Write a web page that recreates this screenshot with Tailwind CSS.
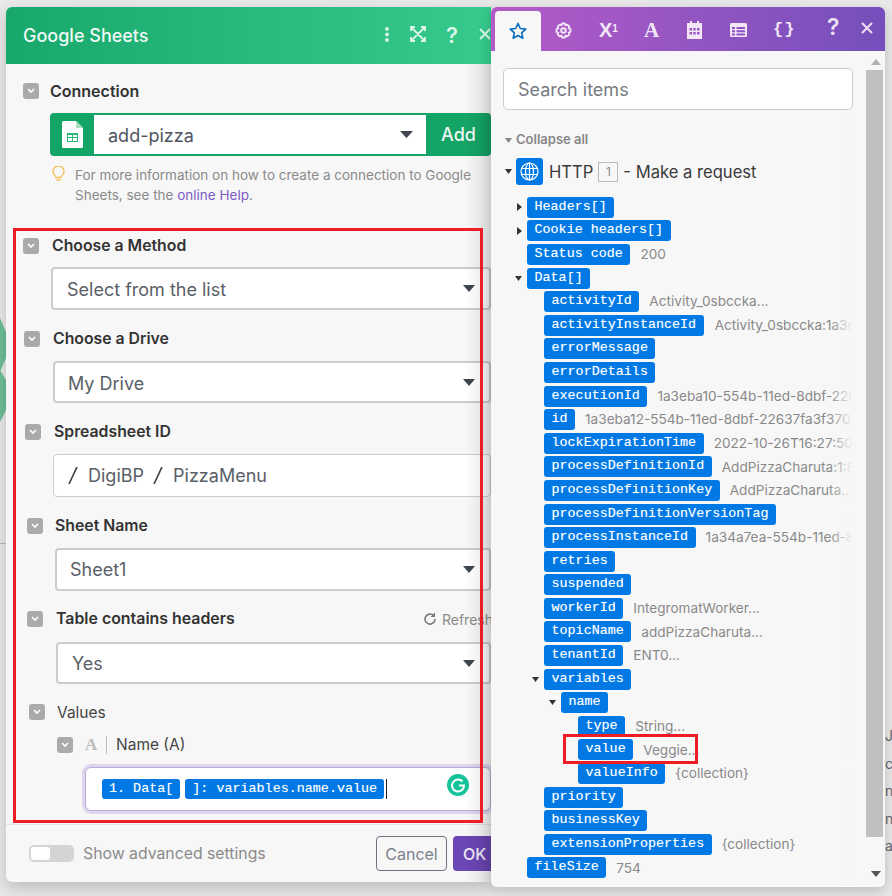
<!DOCTYPE html>
<html>
<head>
<meta charset="utf-8">
<script src="https://cdn.jsdelivr.net/npm/@tailwindcss/browser@4"></script>
</head>
<body class="relative w-[892px] h-[896px] overflow-hidden bg-[#e9e9e9] font-['Inter','Liberation_Sans',sans-serif]">

<!-- canvas behind the windows -->
<svg class="absolute left-0 top-[318px]" width="6" height="104" viewBox="0 0 6 104"><path d="M0 0L6 14V40L0 54ZM6 62V92L0 104V52Z" fill="#6dbf98"/></svg>
<div class="absolute left-0 top-[543px] w-[6px] h-px bg-[#bbb]"></div>
<div class="absolute left-[885px] top-[722px] w-[7px] overflow-hidden text-[14px] leading-[27.5px] text-[#666] whitespace-nowrap">
  <div>J</div><div>c</div><div>ni</div><div>n</div><div>as</div>
</div>

<div class="flex items-start pl-[6px] pt-[7px]">

  <!-- Google Sheets module window -->
  <section class="relative w-[485px] h-[875px] shrink-0 rounded-l-[6px] overflow-hidden bg-[#f7f7f7] shadow-[0_6px_16px_rgba(0,0,0,0.2)] flex flex-col">
    <header class="h-[57px] shrink-0 flex items-center bg-linear-to-r from-[#18a86c] to-[#36ca8c] text-white">
      <h1 class="ml-[17px] text-[18px] font-medium text-white/95">Google Sheets</h1>
      <svg class="absolute left-[378px] top-[19px]" width="6" height="16" viewBox="0 0 6 16"><circle cx="3" cy="3" r="1.9" fill="#d8f5e7"/><circle cx="3" cy="8.5" r="1.9" fill="#d8f5e7"/><circle cx="3" cy="14" r="1.9" fill="#d8f5e7"/></svg>
      <svg class="absolute left-[404px] top-[19px]" width="16" height="16" viewBox="0 0 16 16" fill="none" stroke="#d8f5e7" stroke-width="1.8"><path d="M1 5V1H5M11 1H15V5M15 11V15H11M5 15H1V11M2 2L14 14M14 2L2 14"/></svg>
      <span class="absolute left-[440px] top-[15px] text-[22px] leading-[26px] font-semibold text-[#d8f5e7]">?</span>
      <svg class="absolute left-[473px] top-[21px]" width="12" height="12" viewBox="0 0 12 12" stroke="#d8f5e7" stroke-width="2"><path d="M1 1L11 11M11 1L1 11"/></svg>
    </header>

    <!-- Connection -->
    <div class="mt-[17px] ml-[17px] h-5 flex items-center">
      <span class="w-4 h-4 rounded-[3px] bg-[#aaa] flex items-center justify-center"><svg width="8" height="6" viewBox="0 0 8 6" fill="none" stroke="#fff" stroke-width="1.6"><path d="M1 1L4 4L7 1"/></svg></span>
      <span class="ml-[11px] text-[16px] font-semibold text-[#333]">Connection</span>
    </div>
    <div class="mt-[12px] ml-[44px] h-[43px] flex rounded-[4px] bg-[#14a566]">
      <div class="w-[44px] flex items-center justify-center">
        <svg width="21" height="27" viewBox="0 0 21 27"><path d="M0 1.5A1.5 1.5 0 0 1 1.5 0H14L21 7V25.5A1.5 1.5 0 0 1 19.5 27H1.5A1.5 1.5 0 0 1 0 25.5Z" fill="#fff"/><path d="M14 0L21 7H14Z" fill="#a8dfc3"/><path d="M5 12H16V21H5Z" fill="#2ab673"/><path d="M6 14H10V16H6ZM11 14H15V16H11ZM6 17H10V20H6ZM11 17H15V20H11Z" fill="#fff"/></svg>
      </div>
      <div class="my-[2px] w-[332px] bg-white flex items-center justify-between pl-[14px] pr-[13px]">
        <span class="pt-[2px] text-[18px] text-[#4e5560]">add-pizza</span>
        <svg width="13" height="7" viewBox="0 0 13 7"><path d="M0 0H13L6.5 7Z" fill="#3f4650"/></svg>
      </div>
      <div class="flex-1 flex items-center justify-center text-[18px] font-medium text-white/95">Add</div>
    </div>
    <div class="mt-[9px] ml-[46px] flex">
      <svg class="mt-[1px]" width="13" height="16" viewBox="0 0 13 16" fill="none" stroke="#f4c25a" stroke-width="1.4"><path d="M4 11.5C4 9.5 1 8.500 1 5.500A5.500 5.500 0 0 1 12 5.500C12 8.500 9 9.500 9 11.500ZM4.500 14H8.500"/></svg>
      <p class="ml-[10px] text-[13.5px] leading-[20px] text-[#8a8a8a] whitespace-nowrap">For more information on how to create a connection to Google<br>Sheets, see the <span class="text-[#7c5cc4]">online Help</span>.</p>
    </div>

    <!-- Choose a Method -->
    <div class="mt-[31px] ml-[17px] h-5 flex items-center">
      <span class="w-4 h-4 rounded-[3px] bg-[#aaa] flex items-center justify-center"><svg width="8" height="6" viewBox="0 0 8 6" fill="none" stroke="#fff" stroke-width="1.6"><path d="M1 1L4 4L7 1"/></svg></span>
      <span class="ml-[13px] text-[15.8px] font-semibold text-[#333]">Choose a Method</span>
    </div>
    <div class="mt-[11px] ml-[45px] h-[43px] rounded-[4px] border-2 border-[#ccc] bg-white flex items-center justify-between pl-[14px] pr-[14px]">
      <span class="pt-[2px] text-[18px] text-[#5a6068]">Select from the list</span>
      <svg width="12" height="7" viewBox="0 0 12 7"><path d="M0 0H12L6 7Z" fill="#3f4650"/></svg>
    </div>

    <!-- Choose a Drive -->
    <div class="mt-[19px] ml-[18px] h-5 flex items-center">
      <span class="w-4 h-4 rounded-[3px] bg-[#aaa] flex items-center justify-center"><svg width="8" height="6" viewBox="0 0 8 6" fill="none" stroke="#fff" stroke-width="1.6"><path d="M1 1L4 4L7 1"/></svg></span>
      <span class="ml-[13px] text-[15.8px] font-semibold text-[#333]">Choose a Drive</span>
    </div>
    <div class="mt-[12px] ml-[47px] h-[42px] rounded-[4px] border-2 border-[#ccc] bg-white flex items-center justify-between pl-[13px] pr-[14px]">
      <span class="pt-[2px] text-[18px] text-[#5a6068]">My Drive</span>
      <svg width="12" height="7" viewBox="0 0 12 7"><path d="M0 0H12L6 7Z" fill="#3f4650"/></svg>
    </div>

    <!-- Spreadsheet ID -->
    <div class="mt-[19px] ml-[19px] h-5 flex items-center">
      <span class="w-4 h-4 rounded-[3px] bg-[#aaa] flex items-center justify-center"><svg width="8" height="6" viewBox="0 0 8 6" fill="none" stroke="#fff" stroke-width="1.6"><path d="M1 1L4 4L7 1"/></svg></span>
      <span class="ml-[13px] text-[15.8px] font-semibold text-[#333]">Spreadsheet ID</span>
    </div>
    <div class="mt-[12px] ml-[47px] h-[43px] rounded-[4px] border border-[#ccc] bg-white flex items-center pl-[14px]">
      <svg width="10" height="17" viewBox="0 0 10 17" stroke="#444" stroke-width="1.7"><path d="M9 0L1 17"/></svg>
      <span class="ml-[10px] text-[18px] text-[#5a6068]">DigiBP</span>
      <svg class="ml-[9px]" width="10" height="17" viewBox="0 0 10 17" stroke="#444" stroke-width="1.7"><path d="M9 0L1 17"/></svg>
      <span class="ml-[10px] text-[18px] text-[#5a6068]">PizzaMenu</span>
    </div>

    <!-- Sheet Name -->
    <div class="mt-[19px] ml-[21px] h-5 flex items-center">
      <span class="w-4 h-4 rounded-[3px] bg-[#aaa] flex items-center justify-center"><svg width="8" height="6" viewBox="0 0 8 6" fill="none" stroke="#fff" stroke-width="1.6"><path d="M1 1L4 4L7 1"/></svg></span>
      <span class="ml-[12px] text-[15.8px] font-semibold text-[#333]">Sheet Name</span>
    </div>
    <div class="mt-[12px] ml-[49px] h-[43px] rounded-[4px] border-2 border-[#ccc] bg-white flex items-center justify-between pl-[13px] pr-[14px]">
      <span class="text-[18px] text-[#5a6068]">Sheet1</span>
      <svg width="12" height="7" viewBox="0 0 12 7"><path d="M0 0H12L6 7Z" fill="#3f4650"/></svg>
    </div>

    <!-- Table contains headers -->
    <div class="mt-[18px] ml-[21px] h-5 flex items-center">
      <span class="w-4 h-4 rounded-[3px] bg-[#aaa] flex items-center justify-center"><svg width="8" height="6" viewBox="0 0 8 6" fill="none" stroke="#fff" stroke-width="1.6"><path d="M1 1L4 4L7 1"/></svg></span>
      <span class="ml-[13px] text-[15.9px] font-semibold text-[#333]">Table contains headers</span>
      <svg class="ml-auto" width="14" height="14" viewBox="0 0 14 14" fill="none" stroke="#777" stroke-width="1.6"><path d="M12 7A5 5 0 1 1 10.500 3.500"/><path d="M12 0.500V5H7.500Z" fill="#777" stroke="none"/></svg>
      <span class="ml-[5px] mr-[-2px] text-[14px] text-[#8a8a8a]">Refresh</span>
    </div>
    <div class="mt-[13px] ml-[50px] h-[42px] rounded-[4px] border-2 border-[#ccc] bg-white flex items-center justify-between pl-[14px] pr-[14px]">
      <span class="text-[18px] text-[#5a6068]">Yes</span>
      <svg width="12" height="7" viewBox="0 0 12 7"><path d="M0 0H12L6 7Z" fill="#3f4650"/></svg>
    </div>

    <!-- Values -->
    <div class="mt-[18px] ml-[23px] h-5 flex items-center">
      <span class="w-4 h-4 rounded-[3px] bg-[#aaa] flex items-center justify-center"><svg width="8" height="6" viewBox="0 0 8 6" fill="none" stroke="#fff" stroke-width="1.6"><path d="M1 1L4 4L7 1"/></svg></span>
      <span class="ml-[12px] pt-[2px] text-[15.5px] text-[#444]">Values</span>
    </div>
    <div class="mt-[13px] ml-[51px] h-5 flex items-center">
      <span class="w-4 h-4 rounded-[3px] bg-[#aaa] flex items-center justify-center"><svg width="8" height="6" viewBox="0 0 8 6" fill="none" stroke="#fff" stroke-width="1.6"><path d="M1 1L4 4L7 1"/></svg></span>
      <span class="ml-[12px] w-[22px] h-[18px] border-r border-[#bbb] font-['Liberation_Serif',serif] text-[17px] leading-[18px] font-bold text-[#bbb]">A</span>
      <span class="ml-[9px] text-[15.5px] text-[#444]">Name (A)</span>
    </div>
    <div class="relative mt-[12px] ml-[79px] h-[44px] rounded-[6px] border border-[#b9abd9] ring-[3px] ring-[#ddd5ec] bg-white flex items-center pl-[16px] pb-[1px] [text-shadow:0_0_1px_rgba(255,255,255,0.4)]">
      <span class="h-5 rounded-[3px] bg-[#0079e5] px-[7px] font-['Liberation_Mono',monospace] text-[13.4px] leading-5 text-white">1. Data[</span>
      <span class="ml-[5px] h-5 rounded-[3px] bg-[#0079e5] px-[7px] font-['Liberation_Mono',monospace] text-[13.4px] leading-5 text-white">]: variables.name.value</span>
      <span class="ml-[2px] w-px h-5 bg-[#222]"></span>
      <svg class="absolute left-[361px] top-[6px]" width="22" height="22" viewBox="0 0 22 22"><circle cx="11" cy="11" r="11" fill="#15c39a"/><path d="M15.500 7.500A6 6 0 1 0 17 11.500H12" fill="none" stroke="#fff" stroke-width="2"/></svg>
    </div>

    <!-- Footer -->
    <footer class="mt-[13px] h-[58px] border-t border-[#e4e4e4] flex items-center pl-[23px]">
      <span class="w-[45px] h-[17px] shrink-0 rounded-[5px] bg-[#d4d4d4] p-[2px]"><span class="block w-[19px] h-[13px] rounded-[3px] bg-white"></span></span>
      <span class="ml-[9px] w-[183px] shrink-0 text-[15.8px] whitespace-nowrap text-[#8a8a8a]">Show advanced settings</span>
      <span class="ml-[110px] w-[71px] h-[35px] shrink-0 rounded-[4px] border border-[#6b7480] flex items-center justify-center text-[16px] text-[#7a828c]">Cancel</span>
      <span class="ml-[6px] w-[50px] h-[35px] shrink-0 rounded-l-[4px] bg-[#6b46b5] pl-[10px] flex items-center text-[16px] font-medium text-white/90">OK</span>
    </footer>

    <div class="absolute right-0 top-[57px] bottom-0 w-[26px] bg-linear-to-l from-black/10 to-transparent pointer-events-none"></div>
  </section>

  <!-- Mapping panel -->
  <section class="relative w-[394px] h-[880px] shrink-0 rounded-[6px] overflow-hidden bg-[#f7f7f7] shadow-[0_4px_14px_rgba(0,0,0,0.2)] flex flex-col">
    <nav class="relative h-[44px] shrink-0 bg-linear-to-r from-[#b45ac8] to-[#744fbb] text-white">
      <div class="absolute left-[4px] top-[4px] w-[46px] h-[40px] rounded-t-[4px] bg-[#f7f7f7] flex items-center justify-center">
        <svg width="18" height="18" viewBox="0 0 18 18" fill="none" stroke="#0b6fbe" stroke-width="1.7" stroke-linejoin="round"><path d="M9 1.500L11.300 6.500L16.700 7.100L12.700 10.800L13.800 16.200L9 13.500L4.200 16.200L5.300 10.800L1.300 7.100L6.700 6.500Z"/></svg>
      </div>
      <svg class="absolute left-[64px] top-[15px]" width="17" height="17" viewBox="0 0 17 17" fill="none" stroke="#f3e6f7" stroke-width="2"><circle cx="8.500" cy="8.500" r="2.300"/><path stroke-linejoin="round" stroke-width="1.800" d="M7 1.500H10L10.500 3.400L12.300 2.600L14.400 4.700L13.600 6.500L15.500 7V10L13.600 10.500L14.400 12.300L12.300 14.400L10.500 13.600L10 15.500H7L6.500 13.600L4.700 14.400L2.600 12.300L3.400 10.500L1.500 10V7L3.400 6.500L2.600 4.700L4.700 2.600L6.500 3.400Z"/></svg>
      <span class="absolute left-[108px] top-[12px] font-['Liberation_Sans',sans-serif] text-[20px] leading-[22px] font-bold text-[#f3e6f7]">X<sup class="text-[10px]">1</sup></span>
      <span class="absolute left-[153px] top-[12px] font-['Liberation_Serif',serif] text-[21px] leading-[22px] font-bold text-[#f3e6f7]">A</span>
      <svg class="absolute left-[196px] top-[14px]" width="15" height="18" viewBox="0 0 15 18"><path d="M3 0H5V2H10V0H12V2H15V18H0V2H3Z" fill="#f3e6f7"/><path d="M2.500 7H5V9.500H2.500ZM6.300 7H8.700V9.500H6.300ZM10 7H12.500V9.500H10ZM2.500 11H5V13.500H2.500ZM6.300 11H8.700V13.500H6.300ZM10 11H12.500V13.500H10Z" fill="#9a54c4"/></svg>
      <svg class="absolute left-[239px] top-[16px]" width="17" height="14" viewBox="0 0 17 14"><rect width="17" height="14" rx="1.500" fill="#f3e6f7"/><path d="M2 4H5V6H2ZM6.500 4H15V6H6.500ZM2 7.200H5V9.200H2ZM6.500 7.200H15V9.200H6.500ZM2 10.400H5V12.400H2ZM6.500 10.400H15V12.400H6.500Z" fill="#8f52c2"/></svg>
      <span class="absolute left-[282px] top-[12px] font-['Liberation_Mono',monospace] text-[17px] leading-[22px] font-bold tracking-[1px] text-[#f3e6f7]">{}</span>
      <span class="absolute left-[336px] top-[7px] text-[23px] leading-[26px] font-semibold text-[#ecdff3]">?</span>
      <svg class="absolute left-[370px] top-[15px]" width="12" height="12" viewBox="0 0 12 12" stroke="#ecdff3" stroke-width="2"><path d="M1 1L11 11M11 1L1 11"/></svg>
    </nav>

    <div class="relative flex-1 flex min-h-0">
      <div class="relative w-[375px] shrink-0 overflow-hidden">
        <div class="ml-[12px] mr-[13px] mt-[17px] h-[42px] rounded-[5px] border border-[#ccc] bg-white pl-[14px] flex items-center text-[18px] text-[#767b82]">Search items</div>

        <div class="mt-[20px] ml-[14px] h-5 flex items-center text-[13px] font-semibold text-[#888]">
          <svg width="7" height="5" viewBox="0 0 7 5"><path d="M0 0H7L3.500 5Z" fill="#888"/></svg>
          <span class="ml-[4px]">Collapse all</span>
        </div>
        <div class="mt-[8px] ml-[14px] h-[27px] flex items-center">
          <svg width="7" height="5" viewBox="0 0 7 5"><path d="M0 0H7L3.500 5Z" fill="#333"/></svg>
          <span class="ml-[4px] w-[27px] h-[27px] rounded-[3px] bg-[#0079e5] flex items-center justify-center">
            <svg width="19" height="19" viewBox="0 0 19 19" fill="none" stroke="#fff" stroke-width="1.200"><circle cx="9.500" cy="9.500" r="8.500"/><ellipse cx="9.500" cy="9.500" rx="4" ry="8.500"/><path d="M9.500 1V18M1.500 6.500H17.500M1.500 12.500H17.500"/></svg>
          </span>
          <span class="ml-[6px] pt-[2px] text-[16.6px] text-[#3a3a3a]">HTTP</span>
          <span class="ml-[5px] w-[20px] h-[20px] border border-[#bbb] flex items-center justify-center text-[12px] text-[#888]">1</span>
          <span class="ml-[5px] pt-[2px] text-[16.6px] text-[#3a3a3a]">- Make a request</span>
        </div>

        <!-- tree -->
        <div class="mt-[10.500px] ml-[1px] text-[13.6px] text-[#888] font-['Liberation_Mono',monospace] [text-shadow:0_0_1px_rgba(255,255,255,0.4)]">
          <div class="h-[23.6px] flex items-center pl-[25px]"><svg class="mr-[5px]" width="5" height="8" viewBox="0 0 5 8"><path d="M0 0L5 4L0 8Z" fill="#333"/></svg><span class="h-[21px] rounded-[3px] bg-[#0079e5] px-[7.500px] text-[13.4px] leading-[20px] text-white">Headers[]</span></div>
          <div class="h-[23.6px] flex items-center pl-[25px]"><svg class="mr-[5px]" width="5" height="8" viewBox="0 0 5 8"><path d="M0 0L5 4L0 8Z" fill="#333"/></svg><span class="h-[21px] rounded-[3px] bg-[#0079e5] px-[7.500px] text-[13.4px] leading-[20px] text-white">Cookie headers[]</span></div>
          <div class="h-[23.6px] flex items-center pl-[35px]"><span class="h-[21px] rounded-[3px] bg-[#0079e5] px-[7.500px] text-[13.4px] leading-[20px] text-white">Status code</span><span class="ml-[10px] font-['Inter',sans-serif] whitespace-nowrap">200</span></div>
          <div class="h-[23.6px] flex items-center pl-[23px]"><svg class="mr-[5px]" width="7" height="5" viewBox="0 0 7 5"><path d="M0 0H7L3.500 5Z" fill="#333"/></svg><span class="h-[21px] rounded-[3px] bg-[#0079e5] px-[7.500px] text-[13.4px] leading-[20px] text-white">Data[]</span></div>
          <div class="h-[23.6px] flex items-center pl-[52px]"><span class="h-[21px] rounded-[3px] bg-[#0079e5] px-[7.500px] text-[13.4px] leading-[20px] text-white">activityId</span><span class="ml-[10px] font-['Inter',sans-serif] whitespace-nowrap">Activity_0sbccka...</span></div>
          <div class="h-[23.6px] flex items-center pl-[52px]"><span class="h-[21px] rounded-[3px] bg-[#0079e5] px-[7.500px] text-[13.4px] leading-[20px] text-white">activityInstanceId</span><span class="ml-[11px] font-['Inter',sans-serif] whitespace-nowrap">Activity_0sbccka:1a3eba10-554b</span></div>
          <div class="h-[23.6px] flex items-center pl-[52px]"><span class="h-[21px] rounded-[3px] bg-[#0079e5] px-[7.500px] text-[13.4px] leading-[20px] text-white">errorMessage</span></div>
          <div class="h-[23.6px] flex items-center pl-[52px]"><span class="h-[21px] rounded-[3px] bg-[#0079e5] px-[7.500px] text-[13.4px] leading-[20px] text-white">errorDetails</span></div>
          <div class="h-[23.6px] flex items-center pl-[52px]"><span class="h-[21px] rounded-[3px] bg-[#0079e5] px-[7.500px] text-[13.4px] leading-[20px] text-white">executionId</span><span class="ml-[10px] font-['Inter',sans-serif] whitespace-nowrap">1a3eba10-554b-11ed-8dbf-22637fa3f370</span></div>
          <div class="h-[23.6px] flex items-center pl-[52px]"><span class="h-[21px] rounded-[3px] bg-[#0079e5] px-[7.500px] text-[13.4px] leading-[20px] text-white">id</span><span class="ml-[10px] font-['Inter',sans-serif] whitespace-nowrap">1a3eba12-554b-11ed-8dbf-22637fa3f370</span></div>
          <div class="h-[23.6px] flex items-center pl-[52px]"><span class="h-[21px] rounded-[3px] bg-[#0079e5] px-[7.500px] text-[13.4px] leading-[20px] text-white">lockExpirationTime</span><span class="ml-[10px] font-['Inter',sans-serif] whitespace-nowrap">2022-10-26T16:27:50.000</span></div>
          <div class="h-[23.6px] flex items-center pl-[52px]"><span class="h-[21px] rounded-[3px] bg-[#0079e5] px-[7.500px] text-[13.4px] leading-[20px] text-white">processDefinitionId</span><span class="ml-[10px] font-['Inter',sans-serif] whitespace-nowrap">AddPizzaCharuta:1:8a3f</span></div>
          <div class="h-[23.6px] flex items-center pl-[52px]"><span class="h-[21px] rounded-[3px] bg-[#0079e5] px-[7.500px] text-[13.4px] leading-[20px] text-white">processDefinitionKey</span><span class="ml-[10px] font-['Inter',sans-serif] whitespace-nowrap">AddPizzaCharuta...</span></div>
          <div class="h-[23.6px] flex items-center pl-[52px]"><span class="h-[21px] rounded-[3px] bg-[#0079e5] px-[7.500px] text-[13.4px] leading-[20px] text-white">processDefinitionVersionTag</span></div>
          <div class="h-[23.6px] flex items-center pl-[52px]"><span class="h-[21px] rounded-[3px] bg-[#0079e5] px-[7.500px] text-[13.4px] leading-[20px] text-white">processInstanceId</span><span class="ml-[10px] font-['Inter',sans-serif] whitespace-nowrap">1a34a7ea-554b-11ed-8dbf</span></div>
          <div class="h-[23.6px] flex items-center pl-[52px]"><span class="h-[21px] rounded-[3px] bg-[#0079e5] px-[7.500px] text-[13.4px] leading-[20px] text-white">retries</span></div>
          <div class="h-[23.6px] flex items-center pl-[52px]"><span class="h-[21px] rounded-[3px] bg-[#0079e5] px-[7.500px] text-[13.4px] leading-[20px] text-white">suspended</span></div>
          <div class="h-[23.6px] flex items-center pl-[52px]"><span class="h-[21px] rounded-[3px] bg-[#0079e5] px-[7.500px] text-[13.4px] leading-[20px] text-white">workerId</span><span class="ml-[10px] font-['Inter',sans-serif] whitespace-nowrap">IntegromatWorker...</span></div>
          <div class="h-[23.6px] flex items-center pl-[52px]"><span class="h-[21px] rounded-[3px] bg-[#0079e5] px-[7.500px] text-[13.4px] leading-[20px] text-white">topicName</span><span class="ml-[10px] font-['Inter',sans-serif] whitespace-nowrap">addPizzaCharuta...</span></div>
          <div class="h-[23.6px] flex items-center pl-[52px]"><span class="h-[21px] rounded-[3px] bg-[#0079e5] px-[7.500px] text-[13.4px] leading-[20px] text-white">tenantId</span><span class="ml-[10px] font-['Inter',sans-serif] whitespace-nowrap">ENT0...</span></div>
          <div class="h-[23.6px] flex items-center pl-[40px]"><svg class="mr-[5px]" width="7" height="5" viewBox="0 0 7 5"><path d="M0 0H7L3.500 5Z" fill="#333"/></svg><span class="h-[21px] rounded-[3px] bg-[#0079e5] px-[7.500px] text-[13.4px] leading-[20px] text-white">variables</span></div>
          <div class="h-[23.6px] flex items-center pl-[57px]"><svg class="mr-[5px]" width="7" height="5" viewBox="0 0 7 5"><path d="M0 0H7L3.500 5Z" fill="#333"/></svg><span class="h-[21px] rounded-[3px] bg-[#0079e5] px-[7.500px] text-[13.4px] leading-[20px] text-white">name</span></div>
          <div class="h-[23.6px] flex items-center pl-[86px]"><span class="h-[21px] rounded-[3px] bg-[#0079e5] px-[7.500px] text-[13.4px] leading-[20px] text-white">type</span><span class="ml-[10px] font-['Inter',sans-serif] whitespace-nowrap">String...</span></div>
          <div class="h-[23.6px] flex items-center pl-[86px]"><span class="h-[21px] rounded-[3px] bg-[#0079e5] px-[7.500px] text-[13.4px] leading-[20px] text-white">value</span><span class="ml-[10px] font-['Inter',sans-serif] whitespace-nowrap">Veggie...</span></div>
          <div class="h-[23.6px] flex items-center pl-[86px]"><span class="h-[21px] rounded-[3px] bg-[#0079e5] px-[7.500px] text-[13.4px] leading-[20px] text-white">valueInfo</span><span class="ml-[10px] font-['Inter',sans-serif] whitespace-nowrap">{collection}</span></div>
          <div class="h-[23.6px] flex items-center pl-[52px]"><span class="h-[21px] rounded-[3px] bg-[#0079e5] px-[7.500px] text-[13.4px] leading-[20px] text-white">priority</span></div>
          <div class="h-[23.6px] flex items-center pl-[52px]"><span class="h-[21px] rounded-[3px] bg-[#0079e5] px-[7.500px] text-[13.4px] leading-[20px] text-white">businessKey</span></div>
          <div class="h-[23.6px] flex items-center pl-[52px]"><span class="h-[21px] rounded-[3px] bg-[#0079e5] px-[7.500px] text-[13.4px] leading-[20px] text-white">extensionProperties</span><span class="ml-[10px] font-['Inter',sans-serif] whitespace-nowrap">{collection}</span></div>
          <div class="h-[23.6px] flex items-center pl-[35px]"><span class="h-[21px] rounded-[3px] bg-[#0079e5] px-[7.500px] text-[13.4px] leading-[20px] text-white">fileSize</span><span class="ml-[10px] font-['Inter',sans-serif] whitespace-nowrap">754</span></div>
        </div>

        <div class="absolute top-[60px] right-[13px] bottom-0 w-[24px] bg-linear-to-r from-transparent to-[#f7f7f7]"></div>
        <div class="absolute top-[60px] right-0 bottom-0 w-[13px] bg-[#f7f7f7]"></div>
      </div>

      <!-- scrollbar -->
      <div class="w-[19px] shrink-0 flex flex-col items-center bg-[#f7f7f7]">
        <svg class="mt-[8px]" width="10" height="6" viewBox="0 0 10 6"><path d="M5 0L10 6H0Z" fill="#b0b0b0"/></svg>
        <div class="mt-[5px] ml-[-2px] w-[17px] h-[767px] bg-[#c0c0c0]"></div>
        <svg class="mt-[34px]" width="10" height="6" viewBox="0 0 10 6"><path d="M0 0H10L5 6Z" fill="#555"/></svg>
      </div>
    </div>
  </section>
</div>

<!-- red annotation boxes drawn over the screenshot -->
<div class="absolute left-[13px] top-[228px] w-[470px] h-[595px] border-[3px] border-[#ee1c25] pointer-events-none"></div>
<div class="absolute left-[563px] top-[734px] w-[135px] h-[30px] border-[3px] border-[#ee1c25] pointer-events-none"></div>

</body>
</html>
